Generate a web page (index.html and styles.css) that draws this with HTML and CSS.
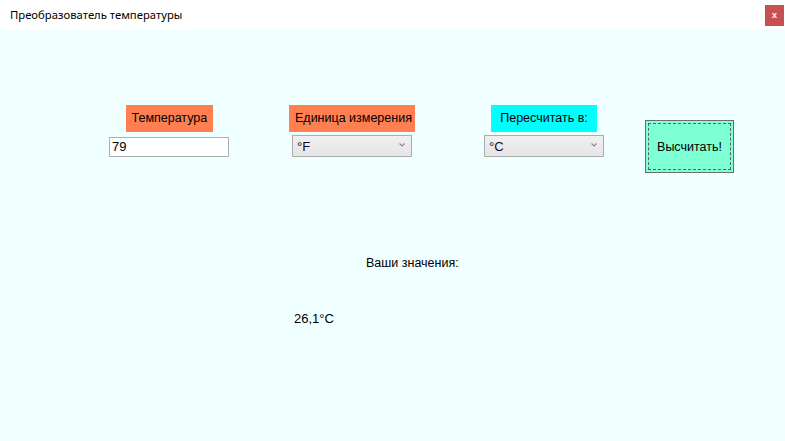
FILE: index.html
```html
<!DOCTYPE html>
<html lang="ru">
<head>
<meta charset="utf-8">
<title>Преобразователь температуры</title>
<link rel="stylesheet" href="styles.css">
</head>
<body>
<div class="window">
  <div class="titlebar">
    <span class="title">Преобразователь температуры</span>
    <span class="close">x</span>
  </div>
  <div class="client">
    <div class="controls">
      <div class="field">
        <div class="label coral">Температура</div>
        <div class="textbox">79</div>
      </div>
      <div class="field gap2">
        <div class="label coral">Единица измерения</div>
        <div class="combo"><span>°F</span>
          <svg class="chev" width="6" height="4" viewBox="0 0 6 4"><path d="M0.5 0.5 L3 3 L5.5 0.5" fill="none" stroke="#8a8a8a" stroke-width="1.1"/></svg>
        </div>
      </div>
      <div class="field gap3">
        <div class="label cyan">Пересчитать в:</div>
        <div class="combo"><span>°C</span>
          <svg class="chev" width="6" height="4" viewBox="0 0 6 4"><path d="M0.5 0.5 L3 3 L5.5 0.5" fill="none" stroke="#8a8a8a" stroke-width="1.1"/></svg>
        </div>
      </div>
      <div class="btn"><div class="btn-inner">Высчитать!</div></div>
    </div>
    <div class="results">
      <div class="res-title">Ваши значения:</div>
      <div class="res-value">26,1°C</div>
    </div>
  </div>
</div>
</body>
</html>
```
FILE: styles.css
```css
html, body {
  margin: 0;
  padding: 0;
  width: 785px;
  height: 441px;
  overflow: hidden;
  background: #ffffff;
}
.window {
  display: flex;
  flex-direction: column;
  width: 785px;
  height: 441px;
}
.titlebar {
  height: 30px;
  display: flex;
  align-items: flex-start;
  justify-content: space-between;
  background: #ffffff;
  font-family: "Noto Sans", "Open Sans", sans-serif;
  font-size: 11.3px;
  color: #000;
}
.title {
  margin: 7px 0 0 10px;
  line-height: 16px;
}
.close {
  width: 19px;
  height: 21px;
  margin: 5px 1px 0 0;
  background: #c75050;
  color: #fff;
  font-family: "Liberation Sans", sans-serif;
  font-weight: bold;
  font-size: 9px;
  line-height: 20px;
  text-align: center;
}
.client {
  flex: 1;
  background: #f0ffff;
  font-family: "Liberation Sans", "DejaVu Sans", sans-serif;
  font-size: 12.5px;
  color: #000;
}
.controls {
  display: flex;
  align-items: flex-start;
  padding: 75px 0 0 109px;
}
.field {
  width: 120px;
  display: flex;
  flex-direction: column;
  align-items: center;
}
.gap2 { margin-left: 63px; }
.gap3 { margin-left: 72px; }
.label {
  height: 27px;
  line-height: 27px;
  padding: 0 6px;
  white-space: nowrap;
  box-sizing: border-box;
  text-align: center;
}
.coral { background: #ff7f50; }
.cyan { background: #00ffff; }
.field:first-child .label { width: 87px; }
.gap2 .label { width: 126px; }
.gap3 .label { width: 106px; }
.textbox {
  align-self: stretch;
  margin-top: 5px;
  height: 20px;
  box-sizing: border-box;
  border: 1px solid #abadb3;
  background: #fff;
  padding-left: 2px;
  line-height: 18px;
  font-size: 13px;
}
.combo {
  align-self: stretch;
  margin-top: 3px;
  height: 22px;
  box-sizing: border-box;
  border: 1px solid #acacac;
  background: linear-gradient(#f0f0f0, #e5e5e5);
  display: flex;
  align-items: center;
  justify-content: space-between;
  padding: 0 6px 0 4px;
  font-size: 13px;
  color: #0a0a2a;
}
.chev { margin-bottom: 2px; }
.btn {
  margin: 15px 0 0 41px;
  width: 89px;
  height: 53px;
  box-sizing: border-box;
  border: 1px solid #6d6d6d;
  background: #7fffd4;
  padding: 2px;
}
.btn-inner {
  height: 100%;
  box-sizing: border-box;
  border: 1px dashed #4a6a60;
  display: flex;
  align-items: center;
  justify-content: center;
}
.res-title {
  margin: 82px 0 0 366px;
  line-height: 16px;
}
.res-value {
  margin: 40px 0 0 294px;
  line-height: 16px;
  font-size: 13px;
}
```
